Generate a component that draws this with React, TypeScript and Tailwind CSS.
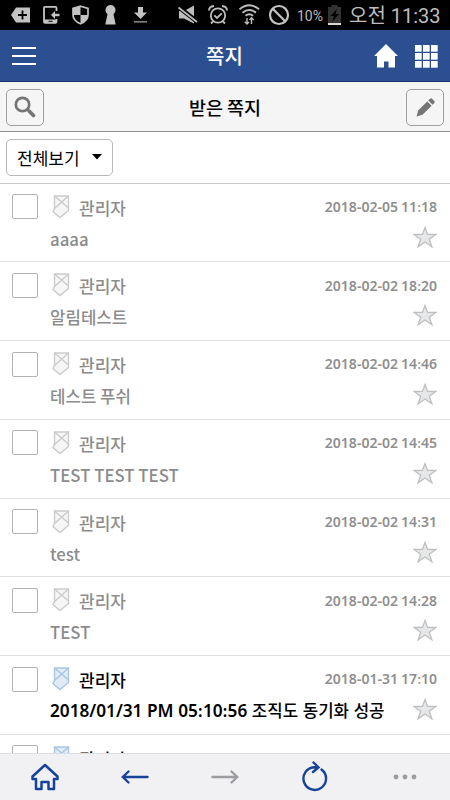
import type { ReactNode } from "react";

interface Message {
  sender: string;
  date: string;
  text: string;
  unread?: boolean;
}

const messages: Message[] = [
  { sender: "관리자", date: "2018-02-05 11:18", text: "aaaa" },
  { sender: "관리자", date: "2018-02-02 18:20", text: "알림테스트" },
  { sender: "관리자", date: "2018-02-02 14:46", text: "테스트 푸쉬" },
  { sender: "관리자", date: "2018-02-02 14:45", text: "TEST TEST TEST" },
  { sender: "관리자", date: "2018-02-02 14:31", text: "test" },
  { sender: "관리자", date: "2018-02-02 14:28", text: "TEST" },
  {
    sender: "관리자",
    date: "2018-01-31 17:10",
    text: "2018/01/31 PM 05:10:56 조직도 동기화 성공",
    unread: true,
  },
  { sender: "관리자", date: "", text: "", unread: true },
];

// Latin letters and digits are set heavier than the Hangul around them
function MixedText({ children }: { children: string }) {
  return (
    <>
      {children.split(/([A-Za-z0-9/-]+)/).map((part, i) =>
        i % 2 === 1 ? (
          <span key={i} className="font-['Noto_Sans',sans-serif] text-[1.025em] font-semibold">
            {part}
          </span>
        ) : (
          part
        )
      )}
    </>
  );
}

function StatusBar() {
  return (
    <div className="flex h-[30px] shrink-0 items-center bg-black text-[#bdbdbd]">
      {/* Notifications */}
      <svg width="160" height="30" viewBox="0 0 160 30" className="shrink-0">
        <path fill="#c3c3c3" d="M16 7.5h14v15H16l-5-7.5z" />
        <path d="M22.5 10.5v9M18 15h9" stroke="#000" strokeWidth="1.8" />
        <path
          d="M56.5 11V7.8q0-1-1-1H45q-1 0-1 1v14q0 1 1 1h10.5q1 0 1-1V19"
          fill="none"
          stroke="#c3c3c3"
          strokeWidth="1.8"
        />
        <path fill="#c3c3c3" d="M44 19.5h12.5v3.3H44z" />
        <path d="M48.5 21.3h4" stroke="#000" strokeWidth="1" />
        <path fill="#c3c3c3" d="M51 15l4-4v2.8h4.5v2.4H55V19z" />
        <path
          fill="none"
          stroke="#c3c3c3"
          strokeWidth="1.7"
          d="M80.5 6.2L88 8.5v6.3c0 4.2-3.5 7.4-7.5 9-4-1.6-7.5-4.8-7.5-9V8.5z"
        />
        <path fill="#c3c3c3" d="M80.5 6.5V15H73V8.5zM80.5 15H88c0 4.2-3.5 7.4-7.5 9z" />
        <circle cx="110.5" cy="10" r="5" fill="#c3c3c3" />
        <path fill="#c3c3c3" d="M108 12h5l2.7 12.5h-10.4z" />
        <path fill="#c3c3c3" d="M138 7h5v5.5h4l-6.5 6.5-6.5-6.5h4z" />
        <path d="M134 21.8h13" stroke="#777" strokeWidth="1.8" />
      </svg>
      {/* System state */}
      <svg width="136" height="30" viewBox="160 0 136 30" className="shrink-0">
        <path fill="#bdbdbd" d="M179 11h5l10-5.5v18L184 18.5h-5z" />
        <path d="M178.5 7L197 21.5" stroke="#000" strokeWidth="4.5" />
        <path d="M178.5 7.5L197 22" stroke="#bdbdbd" strokeWidth="1.7" />
        <g fill="none" stroke="#bdbdbd" strokeWidth="1.8">
          <circle cx="218" cy="15.5" r="7.2" />
          <path d="M209 10.5q0-4 5-4.5M222 6q5 .5 5 4.5M213 21.5l-2 2M223 21.5l2 2M214.3 15.3l2.7 2.7 4.7-4.7" />
        </g>
        <g fill="none" stroke="#bdbdbd" strokeWidth="1.9">
          <path d="M239.5 9.3q9.8-8 19.6 0M242.5 12.7q6.7-5.3 13.5 0M245.5 15.8q3.8-3 7.6 0" />
          <path
            d="M247 18v6M251.5 24v-6M244.8 21.8l2.2 2.3 2-2M249.5 19.9l2-2.2 2.2 2.2"
            strokeWidth="1.4"
          />
        </g>
        <g fill="none" stroke="#c3c3c3" strokeWidth="2.2">
          <circle cx="279" cy="15" r="9" />
          <path d="M272.5 8.5l13 13" />
        </g>
      </svg>
      <span className="w-[32px] pt-px pl-px font-[Roboto,sans-serif] text-[14px] leading-none whitespace-nowrap">
        10%
      </span>
      <svg width="13" height="20" viewBox="0 0 13 20" className="shrink-0">
        <path fill="#333" d="M3.5 0h6v2H13v16H0V2h3.5z" />
        <path fill="#000" d="M9 4L2.500 11H6l-2 6 7-8H7.500z" />
        <path fill="#d6d6d6" d="M0 18h13v2H0z" />
      </svg>
      <span className="ml-[8px] pt-[2px] font-[Roboto,'Noto_Sans_CJK_KR',sans-serif] text-[20px] leading-[28px] whitespace-nowrap">
        오전 11:33
      </span>
    </div>
  );
}

function Header() {
  return (
    <header className="flex h-[52px] shrink-0 items-center justify-between border-b border-[#143474] bg-[#2b4f90] px-3 text-white">
      <button aria-label="메뉴" className="flex w-[52px] flex-col gap-[6px] pt-px">
        <span className="h-[2px] w-6 bg-white" />
        <span className="h-[2px] w-6 bg-white" />
        <span className="h-[2px] w-6 bg-white" />
      </button>
      <h1 className="ml-[11px] text-[20px] leading-none font-medium">쪽지</h1>
      <div className="flex items-center gap-[17px] pt-px">
        <svg width="24" height="24" viewBox="0 0 24 24" fill="currentColor">
          <path d="M12 0l12 12h-3v11.5h-6.5v-6h-4.500v6H3V12H0z" />
        </svg>
        <svg width="23" height="23" viewBox="0 0 23 23" fill="currentColor">
          {[0, 8, 16].map((y) =>
            [0, 8, 16].map((x) => (
              <rect key={`${x}-${y}`} x={x} y={y} width="6.7" height="6.7" />
            ))
          )}
        </svg>
      </div>
    </header>
  );
}

function ToolButton({ label, children }: { label: string; children: ReactNode }) {
  return (
    <button
      aria-label={label}
      className="flex h-[37px] w-[38px] items-center justify-center rounded-[5px] border border-[#a0a0a0] text-[#757575]"
    >
      {children}
    </button>
  );
}

function Toolbar() {
  return (
    <div className="flex h-[50px] shrink-0 items-center justify-between border-b border-[#929292] bg-[#f5f5f5] px-[6px] pt-px">
      <ToolButton label="검색">
        <svg width="23" height="23" viewBox="0 0 23 23" fill="none" stroke="currentColor">
          <circle cx="8.5" cy="8.5" r="6.7" strokeWidth="2.7" />
          <path d="M13.5 13.5l2 2" strokeWidth="2.5" />
          <path d="M15.5 15.5l4 4" strokeWidth="3.7" strokeLinecap="round" />
        </svg>
      </ToolButton>
      <h2 className="text-[18.5px] leading-none font-medium text-black">받은 쪽지</h2>
      <ToolButton label="쓰기">
        <svg width="21" height="21" viewBox="0 0 21 21" fill="currentColor">
          <path d="M1.5 19.5l1.7-6L12.3 4.4l4.3 4.3-9.1 9.1zM13.3 3.4l1.7-1.7q1-1 2 0l2.3 2.3q1 1 0 2l-1.7 1.7z" />
        </svg>
      </ToolButton>
    </div>
  );
}

function FilterBar() {
  return (
    <div className="flex h-[51.5px] shrink-0 items-center border-b border-[#c9c9c9] bg-white px-[6px]">
      <button className="flex h-[37px] w-[107px] items-center justify-between rounded-[5px] border border-[#b8b8b8] px-[10px] text-[17px] leading-none text-black">
        전체보기
        <svg width="10" height="6" viewBox="0 0 10 6">
          <path d="M0 0h10L5 5.5z" />
        </svg>
      </button>
    </div>
  );
}

function NoteIcon({ unread }: { unread?: boolean }) {
  return (
    <svg
      width="20"
      height="24"
      viewBox="0 0 20 24"
      fill={unread ? "#e1ebf6" : "#f6f6f6"}
      stroke={unread ? "#a9c6e0" : "#cbcbcb"}
      strokeWidth="1.4"
      className="block"
    >
      <path d="M3.5 1h14v14.5L9 22.5 2 16.5l1.5-3z" />
      <path d="M3.5 1l14 12M17.5 1l-14 12.5" fill="none" />
    </svg>
  );
}

function StarIcon() {
  return (
    <svg
      width="24"
      height="22"
      viewBox="0 0 24 22"
      fill="#e6e7e9"
      stroke="#bfbfbf"
      strokeWidth="1.3"
      className="mb-[4px] shrink-0"
    >
      <path d="M12 1.5l2.6 6.9 8.4.1-6.7 4.7 2.6 7.6L12 16l-6.9 4.8 2.6-7.6L1 8.5l8.4-.1z" />
    </svg>
  );
}

function MessageRow({ message }: { message: Message }) {
  return (
    <li
      className={`flex h-[78.75px] shrink-0 flex-col border-b border-[#e0e0e0] pr-[13px] pl-[12px] ${
        message.unread ? "text-black" : "text-[#8c8c8c]"
      }`}
    >
      <div className="flex h-[46px] items-center">
        <span className="h-[25px] w-[26px] rounded-[2px] border border-[#b2b2b2] bg-white" />
        <span className="ml-[13px]">
          <NoteIcon unread={message.unread} />
        </span>
        <span className="ml-[8px] pt-px text-[17px] leading-none font-medium">
          {message.sender}
        </span>
        <time className="ml-auto pt-px text-[13.7px] leading-none text-[#8f8f8f]">
          <MixedText>{message.date}</MixedText>
        </time>
      </div>
      <div className="flex h-[18px] items-center justify-between pl-[38px]">
        {message.unread ? (
          <p className="text-[16.8px] leading-none font-medium [word-spacing:0.8px] whitespace-nowrap">
            <MixedText>{message.text}</MixedText>
          </p>
        ) : (
          <p className="pt-px text-[16.8px] leading-none font-medium whitespace-nowrap">
            {message.text}
          </p>
        )}
        <StarIcon />
      </div>
    </li>
  );
}

function BottomNav() {
  return (
    <nav className="grid h-[47px] shrink-0 grid-cols-5 items-center justify-items-center border-t border-[#dedee1] bg-[#f1f1f4] text-[#17439b]">
      <svg
        width="30"
        height="28"
        viewBox="0 0 30 28"
        fill="none"
        stroke="currentColor"
        strokeWidth="2.5"
        strokeLinejoin="round"
      >
        <path d="M15 2L2.5 13.5V16H6v10h5.5v-7h7v7H24V16h3.5v-2.5z" />
      </svg>
      <svg
        width="28"
        height="16"
        viewBox="0 0 28 16"
        fill="none"
        stroke="currentColor"
        strokeWidth="2.4"
        strokeLinecap="round"
      >
        <path d="M26.5 8H2M7.5 2.5L1.8 8l5.7 5.5" />
      </svg>
      <svg
        width="28"
        height="16"
        viewBox="0 0 28 16"
        fill="none"
        stroke="#9d9da1"
        strokeWidth="2.4"
        strokeLinecap="round"
      >
        <path d="M1.5 8H26M20.5 2.5L26.2 8l-5.7 5.5" />
      </svg>
      <svg
        width="28"
        height="32"
        viewBox="0 0 28 32"
        fill="none"
        stroke="currentColor"
        strokeWidth="2.4"
        strokeLinecap="round"
      >
        <path d="M20.5 8.500A11.300 11.300 0 1 1 13 6.300L17 6.500M12.500 1.500l5 5-5.500 4.500" />
      </svg>
      <svg width="24" height="6" viewBox="0 0 24 6" fill="#9d9da1">
        <circle cx="3" cy="3" r="2.4" />
        <circle cx="12" cy="3" r="2.4" />
        <circle cx="21" cy="3" r="2.4" />
      </svg>
    </nav>
  );
}

export default function App() {
  return (
    <div className="flex h-[800px] w-[450px] flex-col overflow-hidden bg-white font-['Noto_Sans_CJK_KR',sans-serif]">
      <StatusBar />
      <Header />
      <Toolbar />
      <FilterBar />
      <ul className="flex min-h-0 flex-1 flex-col overflow-hidden">
        {messages.map((message, i) => (
          <MessageRow key={i} message={message} />
        ))}
      </ul>
      <BottomNav />
    </div>
  );
}
